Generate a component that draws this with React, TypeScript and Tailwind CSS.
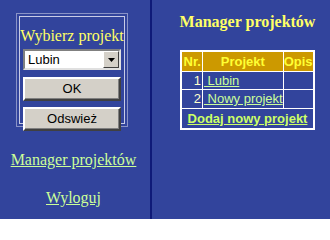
import React from "react";

const serif = { fontFamily: '"Liberation Serif", "Times New Roman", serif' };
const sans = { fontFamily: '"Liberation Sans", Arial, sans-serif' };

function WinButton({ label }: { label: string }) {
  return (
    <button
      className="w-[98px] h-[24px] bg-[#d4d0c8] text-black text-[13px] border-2 border-t-white border-l-white border-r-[#404040] border-b-[#404040] shadow-[inset_-1px_-1px_0_#808080]"
      style={sans}
    >
      {label}
    </button>
  );
}

export default function App() {
  return (
    <div className="w-[330px] h-[219px] bg-[#32449c] flex overflow-hidden">
      {/* left panel */}
      <div className="w-[150px] flex flex-col">
        <div className="ml-[16px] mt-[13px] w-[112px] h-[114px] border border-[#8a93c6] p-[2px]">
          <div className="h-full border border-[#c8cce6] flex flex-col items-center pt-[10px]">
            <div className="text-[16px] leading-[18px] text-[#ffff66]" style={serif}>
              Wybierz projekt
            </div>
            <div className="mt-[4px] w-[98px] h-[21px] bg-white flex items-stretch border-2 border-t-[#808080] border-l-[#808080] border-r-[#e0e0e0] border-b-[#e0e0e0]">
              <div className="flex-1 text-[13px] leading-[17px] pl-[3px] text-black" style={sans}>
                Lubin
              </div>
              <div className="w-[16px] bg-[#d4d0c8] flex items-center justify-center border border-t-white border-l-white border-r-[#404040] border-b-[#404040]">
                <svg width="7" height="4" viewBox="0 0 7 4">
                  <path d="M0 0h7L3.5 4z" fill="black" />
                </svg>
              </div>
            </div>
            <div className="mt-[5px]">
              <WinButton label="OK" />
            </div>
            <div className="mt-[4px]">
              <WinButton label="Odswież" />
            </div>
          </div>
        </div>
        <div className="flex flex-col items-center pl-[-3px] mr-[3px]">
          <a className="mt-[24px] text-[16px] leading-[18px] text-[#ccff99] underline" style={serif}>
            Manager projektów
          </a>
          <a className="mt-[20px] text-[16px] leading-[18px] text-[#ccff99] underline" style={serif}>
            Wyloguj
          </a>
        </div>
      </div>
      {/* divider */}
      <div className="w-[2px] h-full bg-[#0f1a78]" />
      {/* right panel */}
      <div className="flex-1 flex flex-col items-center pl-[13px]">
        <div className="mt-[13px] text-[16px] leading-[18px] font-bold text-[#ffff66]" style={serif}>
          Manager projektów
        </div>
        <table
          className="mt-[19px] border-collapse border-2 border-white text-[13px]"
          style={sans}
        >
          <thead>
            <tr className="bg-[#cc9900] text-[#ffff33] font-bold h-[20px]">
              <td className="border border-white w-[21px] px-[1px] text-center leading-[15px]">Nr.</td>
              <td className="border border-white w-[77px] text-center leading-[15px]">Projekt</td>
              <td className="border border-white w-[30px] text-center leading-[15px]">Opis</td>
            </tr>
          </thead>
          <tbody>
            <tr className="h-[18px]">
              <td className="border border-white text-right pr-[1px] text-[#ffffcc] leading-[15px]">1</td>
              <td className="border border-white pl-[1px] leading-[15px]">
                <a className="text-[#ccff99] underline">&nbsp;Lubin</a>
              </td>
              <td className="border border-white" />
            </tr>
            <tr className="h-[19px]">
              <td className="border border-white text-right pr-[1px] text-[#ffffcc] leading-[15px]">2</td>
              <td className="border border-white pl-[1px] leading-[15px] whitespace-nowrap">
                <a className="text-[#ccff99] underline">&nbsp;Nowy projekt</a>
              </td>
              <td className="border border-white" />
            </tr>
            <tr className="h-[21px]">
              <td colSpan={3} className="border border-white text-center font-bold leading-[15px]">
                <a className="text-[#ccff66] underline">Dodaj nowy projekt</a>
              </td>
            </tr>
          </tbody>
        </table>
      </div>
    </div>
  );
}
